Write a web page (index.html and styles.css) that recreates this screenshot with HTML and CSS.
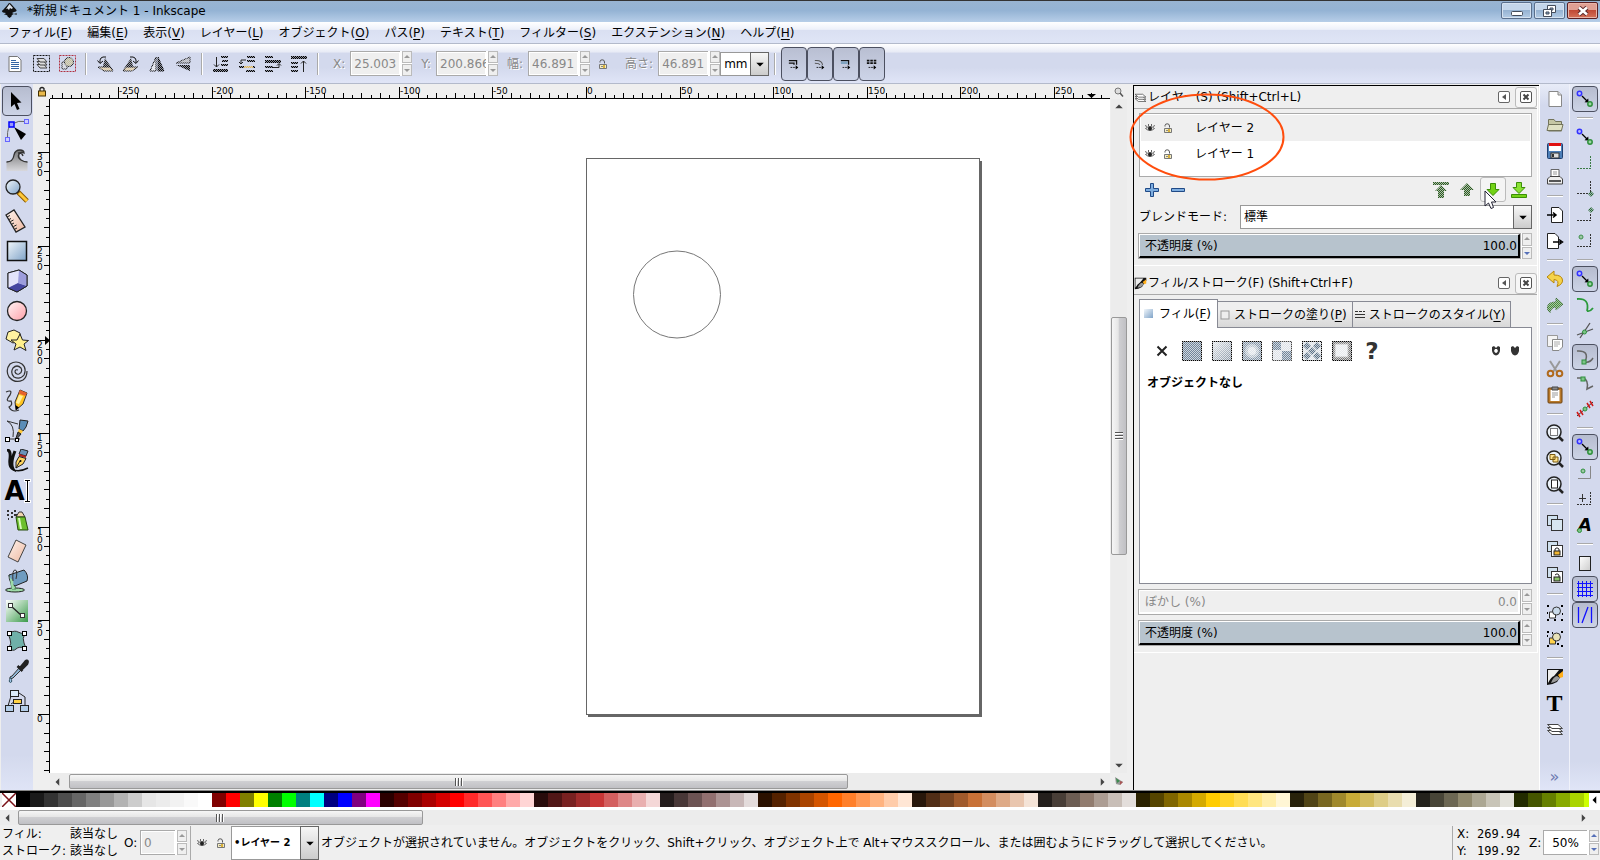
FILE: index.html
```html
<!DOCTYPE html>
<html lang="ja">
<head>
<meta charset="utf-8">
<title>*新規ドキュメント 1 - Inkscape</title>
<link rel="stylesheet" href="styles.css">
</head>
<body>
<svg class="defs" width="0" height="0" aria-hidden="true">
  <defs>
    <pattern id="checker" width="2" height="2" patternUnits="userSpaceOnUse"><rect width="2" height="2" fill="#555"/><rect width="1" height="1" fill="#fff"/><rect x="1" y="1" width="1" height="1" fill="#fff"/></pattern>
    <mask id="dither" maskUnits="userSpaceOnUse" x="0" y="0" width="30" height="30"><rect width="30" height="30" fill="url(#checker)"/></mask>
    <linearGradient id="blue" x1="0" y1="0" x2="1" y2="1"><stop offset="0" stop-color="#f2f7fb"/><stop offset="1" stop-color="#7fa3c8"/></linearGradient>
    <linearGradient id="steel" x1="0" y1="0" x2="1" y2="1"><stop offset="0" stop-color="#e4e8ec"/><stop offset="1" stop-color="#8795a5"/></linearGradient>
    <linearGradient id="pink" x1="0" y1="0" x2="1" y2="1"><stop offset="0" stop-color="#fff6f6"/><stop offset="1" stop-color="#ff9fa8"/></linearGradient>
    <linearGradient id="peach" x1="0" y1="0" x2="1" y2="1"><stop offset="0" stop-color="#fff4ee"/><stop offset="1" stop-color="#eeb8a0"/></linearGradient>
    <linearGradient id="gray" x1="0" y1="0" x2="0" y2="1"><stop offset="0" stop-color="#777"/><stop offset="1" stop-color="#d8d8dc"/></linearGradient>
    <linearGradient id="paper" x1="0" y1="0" x2="1" y2="1"><stop offset="0" stop-color="#fff"/><stop offset="1" stop-color="#ccc"/></linearGradient>
    <linearGradient id="greenfill" x1="0" y1="0" x2="1" y2="1"><stop offset="0" stop-color="#fff"/><stop offset="1" stop-color="#3a9a4a"/></linearGradient>
    <symbol id="eye" viewBox="0 0 10 10"><path d="M.500 5.500Q5 1.500 9.500 5.500Q5 9.500 .500 5.500Z" fill="#ddd" stroke="#666"/><circle cx="5" cy="5.500" r="2" fill="#222"/><path d="M1.500 4L.500 2M3.500 3V1M6.500 3V1M8.500 4L9.500 2" stroke="#666" fill="none"/></symbol>
    <symbol id="unlock" viewBox="0 0 10 10"><path d="M2 3.500V2.500Q2.200 .8 4.200 .8Q6.500 .8 6.500 3V4.500" fill="none" stroke="#555"/><path d="M1.500 5.500H8.500V9.500H1.500Z" fill="#f4ecc0" stroke="#777"/><path d="M6 6V9" stroke="#d9b13a" stroke-width="2"/><path d="M3 7.500H5" stroke="#888"/></symbol>
    <symbol id="snap" viewBox="0 0 18 18"><path d="M6 6L11 11" stroke="#000" stroke-width="1.200"/><path d="M8.500 12.200L12.600 12.600L12.200 8.500Z"/><circle cx="3.500" cy="3.500" r="2.200" fill="#b8b8ff" stroke="#33f" stroke-width="1.500"/><circle cx="14" cy="14" r="2.200" fill="#9cd8a4" stroke="#2f8f3c" stroke-width="1.500"/></symbol>
    <symbol id="down" viewBox="0 0 8 8"><path d="M1 3H7L4 6Z"/></symbol>
    <symbol id="closebox" viewBox="0 0 12 12"><rect x=".500" y=".500" width="11" height="11" rx="1.500" fill="#fff" stroke="#555"/><path d="M3.500 3.500L8.500 8.500M8.500 3.500L3.500 8.500" stroke="#444" stroke-width="2"/></symbol>
    <symbol id="leftbox" viewBox="0 0 12 12"><rect x=".500" y=".500" width="11" height="11" rx="1.500" fill="#fff" stroke="#666"/><path d="M8 3V9L4 6Z" fill="#555"/></symbol>
    <symbol id="fillstroke" viewBox="0 0 18 18"><path d="M1 1H17V5L11 14Q6 17 1 17Z" fill="#111"/><path d="M2 2H13L8 8Q5 9 2 15Z" fill="#eee"/><path d="M5 15Q7 9 11 8L14 10Q11 14 5 15Z" fill="#999"/><path d="M12 7L17 3V9L14 10Z" fill="#ffae1a"/></symbol>
    <symbol id="layers" viewBox="0 0 18 18"><g fill="#fff" stroke="#444"><path d="M1.500 10.500H12L16.500 14.500H6Z"/><path d="M1.500 7.500H12L16.500 11.500H6Z"/><path d="M1.500 4.500H12L16.500 8.500H6Z"/></g></symbol>
  </defs>
</svg>

<div class="app">
<header class="titlebar">
  <svg class="logo" width="17" height="17" viewBox="0 0 17 17"><path d="M8.500 1Q9.500 1 11 3L15.500 8Q16 9.500 13 10L11 11L13 12Q10 13 10.500 14.500L8.500 16L6.500 14.500Q7 13 3 12.500L5 11L2 10.500Q0 9 2 8L6.500 3Q7.500 1 8.500 1Z" fill="#111"/><path d="M8.500 2L12 6L10.500 7L9 6L8 8L6.500 6.500L5 7Z" fill="#d9e2ec"/><path d="M13.500 12H16" stroke="#111"/></svg>
  <h1 class="title">*新規ドキュメント 1 - Inkscape</h1>
  <div class="winbtns">
    <button class="winbtn" aria-label="最小化"><svg width="12" height="12" viewBox="0 0 12 12"><rect x=".5" y="6.500" width="11" height="4" rx="1" fill="#fff" stroke="#444c5a"/></svg></button>
    <button class="winbtn" aria-label="元に戻す"><svg width="13" height="12" viewBox="0 0 13 12"><path d="M4.500 .500H12.500V7.500H4.500Z" fill="#fff" stroke="#444c5a"/><path d="M7 3H10V5H7Z" fill="#86a5c4" stroke="#444c5a"/><path d="M.500 4.500H8.500V11.500H.500Z" fill="#fff" stroke="#444c5a"/><path d="M3 7H6V9H3Z" fill="#86a5c4" stroke="#444c5a"/></svg></button>
    <button class="winbtn close" aria-label="閉じる"><svg width="12" height="10" viewBox="0 0 12 10"><path d="M2 1.500L10 8.500M10 1.500L2 8.500" stroke="#5c2a2a" stroke-width="4.500"/><path d="M2 1.500L10 8.500M10 1.500L2 8.500" stroke="#fff" stroke-width="2.500"/></svg></button>
  </div>
</header>

<nav class="menubar">
  <button>ファイル(<u>F</u>)</button><button>編集(<u>E</u>)</button><button>表示(<u>V</u>)</button><button>レイヤー(<u>L</u>)</button><button>オブジェクト(<u>O</u>)</button><button>パス(<u>P</u>)</button><button>テキスト(<u>T</u>)</button><button>フィルター(<u>S</u>)</button><button>エクステンション(<u>N</u>)</button><button>ヘルプ(<u>H</u>)</button>
</nav>

<div class="toolbar">
  <button class="tb" aria-label="すべて選択"><svg width="16" height="16" viewBox="0 0 16 16"><path d="M2 .500H10.500L14 4V15.500H2Z" fill="#fff" stroke="#777"/><path d="M4 4.500H9M4 6.500H12M4 8.500H12M4 10.500H12M4 12.500H12" stroke="#3465a4"/></svg></button>
  <button class="tb" aria-label="全レイヤー選択"><svg width="17" height="17" viewBox="0 0 17 17"><rect x=".500" y=".500" width="16" height="16" fill="none" stroke="#111" stroke-dasharray="2 1"/><g fill="#ddd" stroke="#444"><path d="M4 9.500H11L14 13H7Z"/><path d="M4 6.500H11L14 10H7Z"/><path d="M4 3.500H11L14 7H7Z"/></g></svg></button>
  <button class="tb" aria-label="選択解除"><svg width="17" height="17" viewBox="0 0 17 17"><rect x=".500" y=".500" width="16" height="16" fill="none" stroke="#b03040" stroke-dasharray="2 1"/><g mask="url(#dither)"><path d="M3 7H8V14H3Z" fill="#ddd" stroke="#222"/><circle cx="10" cy="7" r="4.500" fill="#c9c298" stroke="#222"/></g></svg></button>
  <i class="vsep"></i>
  <button class="tb" aria-label="左回転"><svg width="18" height="18" viewBox="0 0 18 18"><g mask="url(#dither)"><path d="M9 3L17 15H6Z" fill="#222"/><path d="M2 12H14L17 16H8Z" fill="#e8cf9c" stroke="#111"/></g><path d="M10 2Q3 1 4 8M1.500 5.500L4 8.500L7 6" fill="none" stroke="#111"/></svg></button>
  <button class="tb" aria-label="右回転"><svg width="18" height="18" viewBox="0 0 18 18"><g mask="url(#dither)"><path d="M9 3L1 15H12Z" fill="#222"/><path d="M16 12H4L1 16H10Z" fill="#e8cf9c" stroke="#111"/></g><path d="M8 2Q15 1 14 8M16.500 5.500L14 8.500L11 6" fill="none" stroke="#111"/></svg></button>
  <button class="tb" aria-label="水平反転"><svg width="18" height="18" viewBox="0 0 18 18"><g mask="url(#dither)"><path d="M8 2V16H2Z" fill="#eee" stroke="#000"/><path d="M10 2V16H16Z" fill="#111" stroke="#000"/></g></svg></button>
  <button class="tb" aria-label="垂直反転"><svg width="18" height="18" viewBox="0 0 18 18"><g mask="url(#dither)"><path d="M16 8H2L16 2Z" fill="#bbb" stroke="#222"/><path d="M16 10H2L16 16Z" fill="#111"/></g></svg></button>
  <i class="vsep"></i>
  <button class="tb" aria-label="最背面へ"><svg width="18" height="18" viewBox="0 0 18 18"><g mask="url(#dither)"><path d="M9 1H16V3H9ZM10 5H16V7H10ZM9 9H16V11H9Z" fill="#000"/><path d="M1 14H16V17H1Z" fill="#000"/></g><path d="M4.500 2V12M2 9.500L4.500 12L7 9.500" fill="none" stroke="#222"/></svg></button>
  <button class="tb" aria-label="背面へ"><svg width="18" height="18" viewBox="0 0 18 18"><g mask="url(#dither)"><path d="M9 1H17V3H9ZM9 5H17V7H9ZM1 11H17V13H1ZM8 15H17V17H8Z" fill="#000"/><path d="M6 11H15V13H6Z" fill="#e7bb55"/></g><path d="M8 5H3V9M1 7L3 9L5 7" fill="none" stroke="#222"/></svg></button>
  <button class="tb" aria-label="前面へ"><svg width="18" height="18" viewBox="0 0 18 18"><g mask="url(#dither)"><path d="M1 1H9V3H1ZM1 5H17V8H1ZM1 11H9V13H1ZM1 15H9V17H1Z" fill="#000"/></g><path d="M9 12.500H15V9M13 10.500L15 8.500L17 10.500" fill="none" stroke="#222"/></svg></button>
  <button class="tb" aria-label="最前面へ"><svg width="18" height="18" viewBox="0 0 18 18"><g mask="url(#dither)"><path d="M1 1H17V4H1ZM1 7H8V9H1ZM1 11H8V13H1ZM1 15H8V17H1Z" fill="#000"/></g><path d="M13.500 17V6M11 8.500L13.500 6L16 8.500" fill="none" stroke="#222"/></svg></button>
  <i class="vsep"></i>
  <label class="fieldlabel" for="fx">X:</label>
  <span class="spin off"><input id="fx" value="25.003" disabled><span class="steps"><button disabled aria-label="増やす"><svg class="up"><use href="#down"/></svg></button><button disabled aria-label="減らす"><svg><use href="#down"/></svg></button></span></span>
  <label class="fieldlabel" for="fy">Y:</label>
  <span class="spin off"><input id="fy" value="200.866" disabled><span class="steps"><button disabled aria-label="増やす"><svg class="up"><use href="#down"/></svg></button><button disabled aria-label="減らす"><svg><use href="#down"/></svg></button></span></span>
  <label class="fieldlabel" for="fw">幅:</label>
  <span class="spin off"><input id="fw" value="46.891" disabled><span class="steps"><button disabled aria-label="増やす"><svg class="up"><use href="#down"/></svg></button><button disabled aria-label="減らす"><svg><use href="#down"/></svg></button></span></span>
  <button class="tb" aria-label="縦横比を固定"><svg width="10" height="10"><use href="#unlock"/></svg></button>
  <label class="fieldlabel" for="fh">高さ:</label>
  <span class="spin off"><input id="fh" value="46.891" disabled><span class="steps"><button disabled aria-label="増やす"><svg class="up"><use href="#down"/></svg></button><button disabled aria-label="減らす"><svg><use href="#down"/></svg></button></span></span>
  <span class="combo unit"><select aria-label="単位"><option>mm</option></select><span class="arrow"><svg><use href="#down"/></svg></span></span>
  <i class="vsep"></i>
  <div class="toggles">
    <button class="toggle" aria-label="ストローク幅を拡大"><svg width="12" height="12" viewBox="0 0 14 14"><path d="M1 3H10V8M1 6H7V8" fill="none" stroke="#111" stroke-width="1.500"/><path d="M3 11H11" stroke="#111" stroke-dasharray="2 1"/><path d="M9 8.500L12 11L9 13.500Z"/></svg></button>
    <button class="toggle" aria-label="角の半径を拡大"><svg width="12" height="12" viewBox="0 0 14 14"><path d="M1 3Q9 2 10 8M1 6Q6 6 7 8" fill="none" stroke="#555" stroke-width="1.200"/><path d="M3 11H11" stroke="#111" stroke-dasharray="2 1"/><path d="M9 8.500L12 11L9 13.500Z"/></svg></button>
    <button class="toggle" aria-label="グラデーションを移動"><svg width="12" height="12" viewBox="0 0 14 14"><path d="M1 3H10V8" fill="none" stroke="#111" stroke-width="1.500"/><path d="M1 4H9V7H1Z" fill="#7fa3c0"/><path d="M3 11H11" stroke="#111" stroke-dasharray="2 1"/><path d="M9 8.500L12 11L9 13.500Z"/></svg></button>
    <button class="toggle" aria-label="パターンを移動"><svg width="12" height="12" viewBox="0 0 14 14"><path d="M1 3H12M1 6H12" stroke="#111" stroke-width="2" stroke-dasharray="3 1"/><path d="M3 11H11" stroke="#111" stroke-dasharray="2 1"/><path d="M9 8.500L12 11L9 13.500Z"/></svg></button>
  </div>
</div>

<main class="main">
  <aside class="toolbox">
    <button class="tool on" aria-label="選択"><svg viewBox="0 0 24 24"><path d="M6 3V18L9.500 15L12 21L14.500 20L12 14L16.500 13.500Z"/></svg></button>
    <button class="tool" aria-label="ノード"><svg viewBox="0 0 24 24"><path d="M2.500 18Q2 8 7 5Q14 1 20 2.500" fill="none" stroke="#666"/><path d="M9 8L21 15L16 21Z"/><rect x="4" y="3" width="5" height="5" fill="#99f" stroke="#00f" stroke-width="1.500"/><rect x=".500" y="18.500" width="4" height="4" fill="#ccf" stroke="#66f"/><rect x="19.500" y=".500" width="4" height="4" fill="#ccf" stroke="#66f"/></svg></button>
    <button class="tool" aria-label="微調整"><svg viewBox="0 0 24 24"><path d="M1.500 22V13Q8 13 9 6Q10 1 15 1Q19 1 19 4Q16 2 15 5Q14 8 17 11Q19 13 22.500 13V22Z" fill="url(#gray)"/><path d="M1.500 13Q8 13 9 6Q10 1 15 1Q19 1 19 4Q16 2 14 5Q12 8 16 11Q19 13 22.500 13M13 4Q17 3 18 7" fill="none" stroke="#333" stroke-width="1.300"/></svg></button>
    <button class="tool" aria-label="ズーム"><svg viewBox="0 0 24 24"><path d="M13 13L22 22" stroke="#8a5a00" stroke-width="5"/><path d="M14 14L22 22" stroke="#ffc838" stroke-width="3"/><circle cx="8" cy="8" r="7" fill="url(#blue)" stroke="#222" stroke-width="1.300"/></svg></button>
    <button class="tool" aria-label="計測"><svg viewBox="0 0 24 24"><path d="M1 6L9 1L20 18L11 23Z" fill="url(#peach)" stroke="#222" stroke-width="1.300"/><path d="M2 8L5 6.500M4 10.500L6 9.500M5.500 12.500L8.500 11M7 15L9 14M8.500 17.500L11.500 16M10 20L12 19" stroke="#222"/></svg></button>
    <button class="tool" aria-label="矩形"><svg viewBox="0 0 24 24"><rect x="2.500" y="2.500" width="19" height="19" fill="url(#blue)" stroke="#111" stroke-width="1.500"/></svg></button>
    <button class="tool" aria-label="3Dボックス"><svg viewBox="0 0 24 24"><path d="M3 4L14 1L22 6V17L12 23L3 19Z" fill="#b9b9ea" stroke="#222"/><path d="M3 4L14 1V14L3 19Z" fill="#e4e4fa"/><path d="M3 19L13 14L22 17L12 23Z" fill="#4646a0"/><path d="M14 1L22 6V17L13 14Z" fill="#9d9ddc"/><path d="M3 4L14 1L22 6V17L12 23L3 19Z" fill="none" stroke="#222"/></svg></button>
    <button class="tool" aria-label="円"><svg viewBox="0 0 24 24"><circle cx="12" cy="12" r="9.500" fill="url(#pink)" stroke="#222" stroke-width="1.300"/></svg></button>
    <button class="tool" aria-label="星形"><svg viewBox="0 0 24 24"><path d="M3 3L9 1L15 4V11L8 14L1 10Z" fill="#fff2a0" stroke="#222"/><path d="M15 5L17.500 11L23.500 11.500L19 15L21 21.500L15 18L9 21L11 15L6 11L12 11Z" fill="#fff08c" stroke="#222"/></svg></button>
    <button class="tool" aria-label="らせん"><svg viewBox="0 0 24 24"><path d="M13 11Q10 10 10 13Q11 16 14 15Q18 13 16 9Q12 5 8 9Q5 14 9 18Q15 21 19 16Q22 9 17 5Q11 1 5 5Q0 11 4 18Q10 25 18 21Q22 18 22 12" fill="none" stroke="#333" stroke-width="1.200"/></svg></button>
    <button class="tool" aria-label="鉛筆"><svg viewBox="0 0 24 24"><path d="M1 3Q8 0 5 6Q-1 13 6 12Q8 16 4 18Q7 24 14 21" fill="none" stroke="#333" stroke-width="1.200"/><path d="M15 1L22 4L18 15L11 21L10 13Z" fill="#ffc422" stroke="#333"/><path d="M15 1L22 4L20.500 7L13.500 4.500Z" fill="#e5632d"/><path d="M14 6L11 14L14 15L18 7Z" fill="#fff0a0"/><path d="M10.500 16L14 18.500L11 21Z"/></svg></button>
    <button class="tool" aria-label="ペン"><svg viewBox="0 0 24 24"><path d="M2 2L13 5M2 2Q10 6 8 18M3 20H15" fill="none" stroke="#333"/><path d="M15 1L23 2L21 8L18 12L14 10Z" fill="#5b8db8" stroke="#222"/><path d="M14 10L18 12L16 15L13 13Z" fill="#ffc838"/><path d="M13 13L16 15L10 22Z" fill="#555" stroke="#222"/><rect x=".500" y="18.500" width="4" height="4" fill="#fff" stroke="#000"/><rect x="10.500" y="19.500" width="3" height="3" fill="#fff" stroke="#000"/></svg></button>
    <button class="tool" aria-label="カリグラフィ"><svg viewBox="0 0 24 24"><path d="M2 1Q6 1 5 10Q4 18 8 20Q5 14 10 2" fill="none" stroke="#111" stroke-width="3"/><path d="M7 20Q13 24 23 19" fill="none" stroke="#111" stroke-width="1.500"/><path d="M16 0L23 2L21 7L14 5Z" fill="#6a93ba" stroke="#222"/><path d="M14 6L21 8" stroke="#b02020" stroke-width="2"/><path d="M14 7.500L21 9.500L18 15L11 19L11 13Z" fill="#ffd560" stroke="#222"/><path d="M11 19L15 12" stroke="#222"/><circle cx="15.500" cy="12" r="1"/></svg></button>
    <button class="tool text" aria-label="テキスト"><span class="glyph">A</span><svg class="caret" viewBox="0 0 7 24"><path d="M0 1.500H7M0 22.500H7M3.500 2V22" stroke="#fff" stroke-width="3"/><path d="M1 1.500H6M1 22.500H6M3.500 2V22" stroke="#000"/></svg></button>
    <button class="tool" aria-label="スプレー"><svg viewBox="0 0 24 24"><path d="M2 2H4M6 4H8M2 6H4M9 2H11M6 8H8M3 10H4M9 6H12" stroke="#333" stroke-width="2"/><path d="M11 8L14 3H17L20 8Z" fill="#f1d6b0" stroke="#333"/><path d="M11 8H20L23 21H13Z" fill="#6cc02e" stroke="#264d0c"/><path d="M13 9H15L17 20H15Z" fill="#d8f7bd"/></svg></button>
    <button class="tool" aria-label="消しゴム"><svg viewBox="0 0 24 24"><path d="M11 1L21 6L13 23L3 18Z" fill="url(#peach)" stroke="#444"/></svg></button>
    <button class="tool" aria-label="バケツ"><svg viewBox="0 0 24 24"><ellipse cx="10" cy="21" rx="9.500" ry="2" fill="#9edba8" stroke="#222"/><path d="M4 6L7 20H11Q8 14 8 8Z" fill="#9edba8" stroke="#4b7d55"/><path d="M4 6L19 1Q24 6 22 12L10 17Q4 14 4 6Z" fill="#6f9cc0" stroke="#222"/><path d="M4 6Q5 10 8 11L9 20H7Z" fill="#9edba8"/><path d="M8 12Q7 1 10 1T11 10" fill="none" stroke="#333"/></svg></button>
    <button class="tool" aria-label="グラデーション"><svg viewBox="0 0 24 24"><rect x="1" y="1" width="22" height="22" fill="url(#greenfill)"/><path d="M6 7L17 17" stroke="#222" stroke-width="1.300"/><rect x="3.500" y="4.500" width="4" height="4" fill="#fff" stroke="#333"/><rect x="15.500" y="14.500" width="4" height="4" fill="#fff" stroke="#333"/></svg></button>
    <button class="tool" aria-label="メッシュ"><svg viewBox="0 0 24 24"><path d="M4 4Q10 1 13 3T20 4Q17 10 19 14T20 19Q14 17 11 20T4 19Q7 14 5 10T4 4" fill="#6fb0a8" stroke="#333"/><g fill="#fff" stroke="#000"><rect x="2.500" y="2.500" width="4" height="4"/><rect x="17.500" y="2.500" width="4" height="4"/><rect x="2.500" y="17.500" width="4" height="4"/><rect x="17.500" y="17.500" width="4" height="4"/></g></svg></button>
    <button class="tool" aria-label="スポイト"><svg viewBox="0 0 24 24"><path d="M14 9L7 17L5 18V20L8 19L16 11Z" fill="#8fb4d4" stroke="#333"/><path d="M12.500 7L17.500 12M15 9L20 3Q22 1 22.500 2T22 5L17 10Z" fill="#222" stroke="#222" stroke-width="2.500"/><path d="M5.500 18.500Q3 23 5.500 23.500Q8 23 5.500 18.500" fill="#9fc4e4" stroke="#356"/></svg></button>
    <button class="tool" aria-label="コネクタ"><svg viewBox="0 0 24 24"><path d="M6 7L3 17M14 4L20 8V17M9 13L6 15" stroke="#222" fill="none"/><rect x="5.500" y="1.500" width="8" height="6" fill="#dcebfa" stroke="#222"/><rect x="8.500" y="10.500" width="8" height="4" fill="#ffd246" stroke="#222"/><rect x=".500" y="16.500" width="8" height="6" fill="#b3cde8" stroke="#222"/><rect x="15.500" y="16.500" width="8" height="6" fill="#b3cde8" stroke="#222"/></svg></button>
  </aside>

  <section class="editor">
    <button class="corner" aria-label="ガイドを固定"><svg width="10" height="12" viewBox="0 0 10 12"><path d="M3 5V2.500Q5 .500 7 2.500V5" fill="none" stroke="#222" stroke-width="1.300"/><rect x="1.500" y="5" width="7" height="5" fill="#e9b94a" stroke="#443000"/></svg></button>
    <svg class="hruler" id="hruler"></svg>
    <button class="corner" aria-label="ズーム"><svg width="10" height="10" viewBox="0 0 10 10"><circle cx="4" cy="4" r="3" fill="#ddd" stroke="#777"/><path d="M6 6L9 9.500" stroke="#555" stroke-width="1.500"/></svg></button>
    <svg class="vruler" id="vruler"></svg>
    <svg class="canvas"><path d="M931 62V617H538" fill="none" stroke="#666" stroke-width="2"/><rect x="536.500" y="59.500" width="393" height="556" fill="#fff" stroke="#666"/><circle cx="627" cy="195.500" r="43.500" fill="none" stroke="#777"/></svg>
    <div class="vscroll"><button aria-label="上へ"><svg class="up"><use href="#down"/></svg></button><div class="track"><div class="thumb"><i></i><i></i><i></i></div></div><button aria-label="下へ"><svg><use href="#down"/></svg></button></div>
    <div></div>
    <div class="hscroll"><button aria-label="左へ"><svg class="lt"><use href="#down"/></svg></button><div class="track"><div class="thumb"><i></i><i></i><i></i></div></div><button aria-label="右へ"><svg class="rt"><use href="#down"/></svg></button></div>
    <button class="corner" aria-label="カラーマネジメント"><svg width="10" height="10" viewBox="0 0 10 10"><path d="M1 1L9 6L6 9L2 8Z" fill="#999"/><path d="M2 2L6 5L3 7Z" fill="#3d8b50"/><path d="M6 5L9 6L6 9Z" fill="#a55"/></svg></button>
  </section>

  <aside class="docks">
    <section class="dialog">
      <div class="dtitle"><svg width="13" height="13"><use href="#layers"/></svg><h2>レイヤー(S) (Shift+Ctrl+L)</h2><button class="mini" aria-label="アイコン化"><svg width="12" height="12"><use href="#leftbox"/></svg></button><button class="mini framed" aria-label="閉じる"><svg width="12" height="12"><use href="#closebox"/></svg></button></div>
      <div class="dbody">
        <ul class="layerlist">
          <li class="sel"><button aria-label="表示"><svg width="10" height="10"><use href="#eye"/></svg></button><button aria-label="ロック"><svg width="10" height="10"><use href="#unlock"/></svg></button><span>レイヤー 2</span></li>
          <li><button aria-label="表示"><svg width="10" height="10"><use href="#eye"/></svg></button><button aria-label="ロック"><svg width="10" height="10"><use href="#unlock"/></svg></button><span>レイヤー 1</span></li>
        </ul>
        <div class="layerbtns">
          <button aria-label="追加"><svg width="16" height="16" viewBox="0 0 16 16"><path d="M6.500 1.500H9.500V6.500H14.500V9.500H9.500V14.500H6.500V9.500H1.500V6.500H6.500Z" fill="#7eaee0" stroke="#204a87"/></svg></button>
          <button aria-label="削除"><svg width="16" height="16" viewBox="0 0 16 16"><path d="M1.500 6.500H14.500V9.500H1.500Z" fill="#7eaee0" stroke="#204a87"/></svg></button>
          <span class="grow"></span>
          <button aria-label="最上位へ"><svg width="16" height="16" viewBox="0 0 16 16"><g mask="url(#dither)" fill="#2c5c22"><path d="M0 0H16V3H0Z"/><path d="M8 3L14 9H11V16H5V9H2Z"/></g></svg></button>
          <button aria-label="上へ"><svg width="16" height="16" viewBox="0 0 16 16"><path d="M8 1L15 8H11V14H5V8H1Z" fill="#2c5c22" mask="url(#dither)"/></svg></button>
          <button class="hover" aria-label="下へ"><svg width="16" height="16" viewBox="0 0 16 16"><path d="M5.500 1.500H10.500V7.500H14L8 13.500L2 7.500H5.500Z" fill="#73d216" stroke="#3b8f06"/></svg></button>
          <button aria-label="最下位へ"><svg width="16" height="16" viewBox="0 0 16 16"><path d="M5.500 .500H10.500V5.500H14L8 11.500L2 5.500H5.500Z" fill="#8ae234" stroke="#3b8f06"/><path d="M.500 12.500H15.500V15.500H.500Z" fill="#73d216" stroke="#3b8f06"/></svg></button>
        </div>
        <div class="blend"><label for="blend">ブレンドモード:</label><span class="combo"><select id="blend"><option>標準</option></select><span class="arrow"><svg><use href="#down"/></svg></span></span></div>
        <div class="slider"><span class="bar"><label for="lop">不透明度 (%)</label><input id="lop" value="100.0"></span><span class="steps"><button disabled aria-label="増やす"><svg class="up"><use href="#down"/></svg></button><button class="live" aria-label="減らす"><svg><use href="#down"/></svg></button></span></div>
      </div>
    </section>
    <section class="dialog">
      <div class="dtitle"><svg width="13" height="13"><use href="#fillstroke"/></svg><h2>フィル/ストローク(F) (Shift+Ctrl+F)</h2><button class="mini" aria-label="アイコン化"><svg width="12" height="12"><use href="#leftbox"/></svg></button><button class="mini framed" aria-label="閉じる"><svg width="12" height="12"><use href="#closebox"/></svg></button></div>
      <div class="dbody">
        <div class="tabs">
          <button class="tab active"><svg width="10" height="10" viewBox="0 0 10 10"><rect width="9" height="9" fill="url(#blue)"/></svg><span>フィル(<u>F</u>)</span></button><button class="tab"><svg width="10" height="10" viewBox="0 0 10 10"><rect x="1" y="1" width="8" height="8" fill="#eee" stroke="#999"/></svg><span>ストロークの塗り(<u>P</u>)</span></button><button class="tab"><svg width="10" height="10" viewBox="0 0 10 10"><path d="M0 1.500H10" stroke="#333" stroke-dasharray="3 1"/><path d="M0 4.500H10M0 7.500H10" stroke="#333"/></svg><span>ストロークのスタイル(<u>Y</u>)</span></button>
        </div>
        <div class="page">
          <div class="paints">
            <button aria-label="なし"><svg width="20" height="20" viewBox="0 0 20 20"><path d="M5.500 5.500L14.500 14.500M14.500 5.500L5.500 14.500" stroke="#222" stroke-width="2"/></svg></button>
            <button aria-label="単一色"><svg width="20" height="20" viewBox="0 0 20 20"><rect x=".500" y=".500" width="19" height="19" fill="#71869c" stroke="#000" mask="url(#dither)"/></svg></button>
            <button aria-label="線形"><svg width="20" height="20" viewBox="0 0 20 20"><rect x=".500" y=".500" width="19" height="19" fill="url(#steel)" stroke="#000" mask="url(#dither)"/></svg></button>
            <button aria-label="放射"><svg width="20" height="20" viewBox="0 0 20 20"><g mask="url(#dither)"><rect x=".500" y=".500" width="19" height="19" fill="#8798aa" stroke="#000"/><circle cx="10" cy="10" r="7" fill="#b7c2cd"/><circle cx="10" cy="10" r="4" fill="#e0e5ea"/></g></svg></button>
            <button aria-label="メッシュ"><svg width="20" height="20" viewBox="0 0 20 20"><g mask="url(#dither)"><rect x=".500" y=".500" width="19" height="19" fill="#dde2e8" stroke="#444"/><path d="M1 1H9V9H1ZM10 10H19V19H10Z" fill="#71869c"/></g></svg></button>
            <button aria-label="パターン"><svg width="20" height="20" viewBox="0 0 20 20"><g mask="url(#dither)"><rect x=".500" y=".500" width="19" height="19" fill="#dde2e8" stroke="#000"/><path d="M5 1L9 5L5 9L1 5ZM15 1L19 5L15 9L11 5ZM5 11L9 15L5 19L1 15ZM15 11L19 15L15 19L11 15ZM10 6L14 10L10 14L6 10Z" fill="#5c7288"/></g></svg></button>
            <button aria-label="スウォッチ"><svg width="20" height="20" viewBox="0 0 20 20"><g mask="url(#dither)"><rect x=".500" y=".500" width="19" height="19" fill="#777" stroke="#000"/><rect x="3" y="3" width="13" height="13" fill="#e8ebee" stroke="#aaa"/></g></svg></button>
            <button class="q" aria-label="未設定">?</button>
            <span class="grow"></span>
            <button class="rule" aria-label="偶奇"><svg width="10" height="10" viewBox="0 0 10 10"><path d="M1 1L3 0L5 2L7 0L9 1V5Q8 9 5 9.500Q2 9 1 5Z" fill="#333"/><path d="M4 3H6L7 5Q6 7 5 7T3 5Z" fill="#fff"/></svg></button>
            <button class="rule" aria-label="非ゼロ"><svg width="10" height="10" viewBox="0 0 10 10"><path d="M1 1L3 0L5 2L7 0L9 1V5Q8 9 5 9.500Q2 9 1 5Z" fill="#333"/></svg></button>
          </div>
          <p class="none">オブジェクトなし</p>
        </div>
        <div class="slider off"><span class="bar"><label for="blur">ぼかし (%)</label><input id="blur" value="0.0" disabled></span><span class="steps"><button disabled aria-label="増やす"><svg class="up"><use href="#down"/></svg></button><button disabled aria-label="減らす"><svg><use href="#down"/></svg></button></span></div>
        <div class="slider"><span class="bar"><label for="fop">不透明度 (%)</label><input id="fop" value="100.0"></span><span class="steps"><button disabled aria-label="増やす"><svg class="up"><use href="#down"/></svg></button><button disabled aria-label="減らす"><svg><use href="#down"/></svg></button></span></div>
      </div>
    </section>
    <svg class="mark" width="158" height="90" viewBox="0 0 158 90"><ellipse cx="79" cy="45" rx="76.500" ry="42.500" fill="none" stroke="#ff4d0d" stroke-width="2"/></svg>
    <svg class="pointer" width="14" height="20" viewBox="0 0 14 20"><path d="M1 1V16L4.500 13L7 18.500L9.500 17.500L7.500 12H12Z" fill="#fff" stroke="#223"/></svg>
  </aside>

  <aside class="side commands">
    <button aria-label="新規"><svg viewBox="0 0 18 18"><path d="M3 1.500H12L15.500 5V16.500H3Z" fill="#fff" stroke="#888"/><path d="M12 1.500V5H15.500" fill="#ddd" stroke="#888"/></svg></button>
    <button aria-label="開く"><svg viewBox="0 0 18 18"><path d="M2.500 15V3.500H8L9.500 5.500H15.500V15Z" fill="#c5c6a4" stroke="#73745a"/><path d="M1 14.500L2.500 8.500H17L15.500 14.500Z" fill="#e0e1c4" stroke="#73745a"/></svg></button>
    <button aria-label="保存"><svg viewBox="0 0 18 18"><rect x="1.500" y="1.500" width="15" height="15" rx="1" fill="#4d7fb8" stroke="#1f3f6f"/><rect x="3" y="2" width="12" height="7" fill="#fff"/><path d="M3 2.500H15" stroke="#e01010" stroke-width="3"/><rect x="5" y="11" width="8" height="5" fill="#ddd" stroke="#333"/><path d="M7 12V15" stroke="#333" stroke-width="2"/></svg></button>
    <button aria-label="印刷"><svg viewBox="0 0 18 18"><path d="M5 9V1.500H13V9" fill="#fff" stroke="#666"/><path d="M7 4H11M7 6H11" stroke="#999"/><path d="M1.500 16V11L4 8.500H14L16.500 11V16Z" fill="#eee" stroke="#444"/><path d="M3 13H15" stroke="#555" stroke-width="2"/></svg></button>
    <hr>
    <button aria-label="インポート"><svg viewBox="0 0 18 18"><path d="M5.500 1.500H13L16.500 5V16.500H5.500Z" fill="#fff" stroke="#222"/><path d="M1 9H9M7 6.500L10 9L7 11.500" fill="none" stroke="#000" stroke-width="1.500"/></svg></button>
    <button aria-label="エクスポート"><svg viewBox="0 0 18 18"><path d="M1.500 1.500H9L12.500 5V16.500H1.500Z" fill="#fff" stroke="#222"/><path d="M7 10H15M13 7.500L16.500 10L13 12.500" fill="none" stroke="#000" stroke-width="1.500"/></svg></button>
    <hr>
    <button aria-label="元に戻す"><svg viewBox="0 0 18 18"><path d="M1 7L8 1V5Q16 5 16.500 10Q17 14 11 16.500Q14 10 8 9.500V13Z" fill="#f5d34a" stroke="#b8860b"/></svg></button>
    <button aria-label="やり直し"><svg viewBox="0 0 18 18"><path d="M17 8L10 2V6Q2 6 1.500 11Q1 14 4 16.500Q5 11 10 11V14Z" fill="#4c9232" stroke="#3d6e30" mask="url(#dither)"/></svg></button>
    <hr>
    <button aria-label="コピー"><svg viewBox="0 0 18 18"><path d="M1.500 1.500H11.500V12.500H1.500Z" fill="#f4f4f4" stroke="#999"/><path d="M6.500 5.500H16.500V13L13 16.500H6.500Z" fill="#fff" stroke="#888"/><path d="M8 8H14M8 10H14M8 12H12" stroke="#aaa"/></svg></button>
    <button aria-label="切り取り"><svg viewBox="0 0 18 18"><path d="M4 1L11 12M14 1L7 12" stroke="#999" stroke-width="2"/><circle cx="4.500" cy="13.500" r="2.800" fill="none" stroke="#b06a1e" stroke-width="2"/><circle cx="13.500" cy="13.500" r="2.800" fill="none" stroke="#b06a1e" stroke-width="2"/></svg></button>
    <button aria-label="貼り付け"><svg viewBox="0 0 18 18"><rect x="2" y="2" width="14" height="15" rx="1" fill="#b97a2a" stroke="#6e4310"/><rect x="4.500" y="4" width="9" height="11" fill="#fff"/><path d="M6 1H12V4H6Z" fill="#888" stroke="#444"/><path d="M6 7H12M6 9H12M6 11H9" stroke="#999"/></svg></button>
    <hr>
    <button aria-label="選択をズーム"><svg viewBox="0 0 18 18"><circle cx="8" cy="8" r="7" fill="#eaf1f8" stroke="#222" stroke-width="1.500"/><path d="M13 13L17 17" stroke="#222" stroke-width="2.500"/><rect x="4.500" y="4.500" width="7" height="7" fill="#fff" stroke="#000" stroke-dasharray="1 1"/></svg></button>
    <button aria-label="描画をズーム"><svg viewBox="0 0 18 18"><circle cx="8" cy="8" r="7" fill="#eaf1f8" stroke="#222" stroke-width="1.500"/><path d="M13 13L17 17" stroke="#222" stroke-width="2.500"/><path d="M4 4.500H9V9.500H4ZM7 7H12V12H7Z" fill="#ffe28a" stroke="#7a5a10"/></svg></button>
    <button aria-label="ページをズーム"><svg viewBox="0 0 18 18"><circle cx="8" cy="8" r="7" fill="#eaf1f8" stroke="#222" stroke-width="1.500"/><path d="M13 13L17 17" stroke="#222" stroke-width="2.500"/><rect x="5.500" y="4" width="6" height="8" fill="#fff" stroke="#222"/></svg></button>
    <hr>
    <button aria-label="複製"><svg viewBox="0 0 18 18"><rect x="1.500" y="1.500" width="10" height="10" fill="#cfe0ee" stroke="#333"/><rect x="5.500" y="5.500" width="11" height="11" fill="#d7e5f0" stroke="#333"/></svg></button>
    <button aria-label="クローン"><svg viewBox="0 0 18 18"><rect x="1.500" y="1.500" width="10" height="10" fill="#cfe0ee" stroke="#333"/><rect x="5.500" y="5.500" width="11" height="11" fill="#fff" stroke="#333"/><path d="M9 11V9Q11 6.500 13 9V11" fill="none" stroke="#222"/><rect x="8" y="11" width="6" height="4" fill="#f2b632" stroke="#222"/></svg></button>
    <button aria-label="クローン解除"><svg viewBox="0 0 18 18"><rect x="1.500" y="1.500" width="10" height="10" fill="#cfe0ee" stroke="#333"/><rect x="5.500" y="5.500" width="11" height="11" fill="#fff" stroke="#333"/><path d="M9 9Q11 6.500 13 9V11" fill="none" stroke="#222"/><rect x="8" y="11" width="6" height="4" fill="#8bc46a" stroke="#222"/></svg></button>
    <hr>
    <button aria-label="グループ化"><svg viewBox="0 0 18 18"><path d="M3.500 8H9.500V14H3.500Z" fill="#fff" stroke="#333"/><circle cx="10.500" cy="7" r="4" fill="#c9d9e9" stroke="#333"/><path d="M1 2H3M15 2H17M1 16H3M15 16H17M1 9H2M8 16H10M16 10H17" stroke="#000" stroke-width="2"/></svg></button>
    <button aria-label="グループ解除"><svg viewBox="0 0 18 18"><path d="M3.500 8H9.500V14H3.500Z" fill="#ffd24a" stroke="#333"/><circle cx="10.500" cy="7" r="4" fill="#e8e2b8" stroke="#333"/><path d="M1 2H3M15 2H17M1 16H3M15 16H17M1 6H2M11 14H13M6 3H7" stroke="#000" stroke-width="2"/></svg></button>
    <hr>
    <button aria-label="フィル/ストローク"><svg viewBox="0 0 18 18"><use href="#fillstroke"/></svg></button>
    <button class="serifT" aria-label="テキスト">T</button>
    <button aria-label="レイヤー"><svg viewBox="0 0 18 18"><use href="#layers"/></svg></button>
    <span class="grow"></span>
    <button class="more" aria-label="その他">»</button>
  </aside>

  <aside class="side snapbar">
    <button class="on" aria-label="スナップ"><svg><use href="#snap"/></svg></button>
    <hr>
    <button aria-label="境界枠"><svg><use href="#snap"/></svg></button>
    <button aria-label="境界枠エッジ"><svg viewBox="0 0 18 18"><path d="M14.500 2V14.500M1 14.500H15" stroke="#3b7b45" stroke-dasharray="2 1" fill="none"/></svg></button>
    <button aria-label="境界枠角"><svg viewBox="0 0 18 18"><path d="M14.500 1V12M1 13.500H12" stroke="#333" stroke-dasharray="2 1" fill="none"/><path d="M15 11L18 14L15 17L12 14Z" fill="#2b6b35" mask="url(#dither)"/></svg></button>
    <button aria-label="エッジ中点"><svg viewBox="0 0 18 18"><path d="M14.500 8V14M1 14.500H15" stroke="#333" stroke-dasharray="2 1" fill="none"/><path d="M15 1L18 4L15 7L12 4Z" fill="#2b6b35" mask="url(#dither)"/></svg></button>
    <button aria-label="枠中心"><svg viewBox="0 0 18 18"><path d="M14.500 2V14.500M1 14.500H15" stroke="#333" stroke-dasharray="2 1" fill="none"/><circle cx="5" cy="5" r="2" fill="#9cc8a4" stroke="#3f8f4c"/></svg></button>
    <hr>
    <button class="on" aria-label="ノード"><svg><use href="#snap"/></svg></button>
    <button aria-label="パス"><svg viewBox="0 0 18 18"><path d="M1 3Q14 2 11 15M11 15Q14 16 17 12" fill="none" stroke="#2a9a3a" stroke-width="1.800"/></svg></button>
    <button aria-label="交差"><svg viewBox="0 0 18 18"><path d="M1 13L17 7M4 16L14 1" stroke="#555" stroke-width="1.300"/><circle cx="8.500" cy="10" r="2" fill="#7cc488" stroke="#2f8f3c"/></svg></button>
    <button class="on" aria-label="シャープ"><svg viewBox="0 0 18 18"><path d="M1 3Q14 2 9 14M9 14Q14 15 17 10" fill="none" stroke="#666" stroke-width="1.500"/><rect x="6" y="12" width="4" height="4" fill="#7cc488" stroke="#2f8f3c"/></svg></button>
    <button aria-label="スムーズ"><svg viewBox="0 0 18 18"><path d="M1 4H7Q13 6 11 15L17 12" fill="none" stroke="#666" stroke-width="1.500"/><rect x="5" y="3" width="4" height="4" fill="#7cc488" stroke="#2f8f3c"/></svg></button>
    <button aria-label="線分中点"><svg viewBox="0 0 18 18"><path d="M1 16L17 2" stroke="#333"/><path d="M1 12L4 17M4 10L7 15M11 3L14 8M14 1L17 6" stroke="#d01818" stroke-width="1.500"/><circle cx="9" cy="9" r="2" fill="#7cc488" stroke="#2f8f3c"/></svg></button>
    <hr>
    <button class="on" aria-label="その他の点"><svg><use href="#snap"/></svg></button>
    <button aria-label="オブジェクト中心"><svg viewBox="0 0 18 18"><path d="M14.500 2V14.500H2" stroke="#888" fill="none"/><circle cx="7" cy="7" r="2" fill="#9cc8a4" stroke="#2f8f3c"/></svg></button>
    <button aria-label="回転中心"><svg viewBox="0 0 18 18"><path d="M14.500 2V14.500M1 14.500H15" stroke="#333" stroke-dasharray="2 1" fill="none"/><path d="M6.500 4V12M3 8.500H10" stroke="#333"/></svg></button>
    <button class="snapA" aria-label="テキストベースライン"><span>A</span><svg viewBox="0 0 18 18"><circle cx="3.500" cy="14.500" r="2" fill="#7cc488" stroke="#2f8f3c"/></svg></button>
    <hr>
    <button aria-label="ページ境界"><svg viewBox="0 0 18 18"><rect x="3.500" y="2.500" width="11" height="14" fill="url(#paper)" stroke="#222"/></svg></button>
    <button class="on" aria-label="グリッド"><svg viewBox="0 0 18 18"><path d="M2.500 1V17M6.500 1V17M10.500 1V17M14.500 1V17M1 3.500H17M1 7.500H17M1 11.500H17M1 15.500H17" stroke="#11f"/></svg></button>
    <button class="on" aria-label="ガイド"><svg viewBox="0 0 18 18"><path d="M2.500 1V17M15.500 1V17M6 17L12 1" stroke="#11f" stroke-width="1.300"/></svg></button>
  </aside>
</main>

<div class="palette">
  <div class="swatches" id="swatches"><button class="nofill" aria-label="なし"><svg width="14" height="14" viewBox="0 0 14 14"><path d="M0 0L14 14M14 0L0 14" stroke="#7a1218" stroke-width="1.500"/></svg></button></div>
  <button class="palmenu" aria-label="パレットメニュー"><svg class="lt"><use href="#down"/></svg></button>
</div>
<div class="hscroll palscroll"><button aria-label="左へ"><svg class="lt"><use href="#down"/></svg></button><div class="track"><div class="thumb"><i></i><i></i><i></i></div></div><button aria-label="右へ"><svg class="rt"><use href="#down"/></svg></button></div>

<footer class="status">
  <dl class="style"><dt>フィル:</dt><dd>該当なし</dd><dt>ストローク:</dt><dd>該当なし</dd></dl>
  <label class="olabel" for="op">O:</label>
  <span class="spin off small"><input id="op" value="0" disabled><span class="steps"><button disabled aria-label="増やす"><svg class="up"><use href="#down"/></svg></button><button disabled aria-label="減らす"><svg><use href="#down"/></svg></button></span></span>
  <div class="layerctl"><button aria-label="表示"><svg width="10" height="10"><use href="#eye"/></svg></button><button aria-label="ロック"><svg width="10" height="10"><use href="#unlock"/></svg></button></div>
  <span class="combo layer"><select aria-label="現在のレイヤー"><option>•レイヤー 2</option></select><span class="arrow"><svg><use href="#down"/></svg></span></span>
  <p class="msg">オブジェクトが選択されていません。オブジェクトをクリック、Shift+クリック、オブジェクト上で Alt+マウススクロール、または囲むようにドラッグして選択してください。</p>
  <dl class="coords"><dt>X:</dt><dd>269.94</dd><dt>Y:</dt><dd>199.92</dd></dl>
  <label class="zlabel" for="zoom">Z:</label>
  <span class="spin zoom"><input id="zoom" value="50%"><span class="steps"><button class="live" aria-label="増やす"><svg class="up"><use href="#down"/></svg></button><button class="live" aria-label="減らす"><svg><use href="#down"/></svg></button></span></span>
</footer>
</div>
<script src="script.js"></script>
</body>
</html>
```
FILE: styles.css
```css
* { box-sizing: border-box; }
body { margin: 0; font: 12px/16px "DejaVu Sans", "Noto Sans CJK JP", sans-serif; color: #000; background: #efefef; }
button, input, select { font: inherit; color: inherit; margin: 0; padding: 0; border: 0; background: none; border-radius: 0; min-width: 0; }
button { display: flex; align-items: center; justify-content: center; flex: none; }
svg { display: block; flex: none; }
h1, h2, p, dl, dd, ul { margin: 0; padding: 0; font-size: 12px; font-weight: normal; }
ul { list-style: none; }
.defs { position: absolute; }
.grow { flex: 1; }
.up { transform: rotate(180deg); }
.lt { transform: rotate(90deg); }
.rt { transform: rotate(-90deg); }
.app { display: flex; flex-direction: column; height: 100vh; overflow: hidden; }

.titlebar { display: flex; align-items: center; height: 22px; padding: 0 2px 2px 1px; border-top: 1px solid #333; background: linear-gradient(#98b4d2, #94b3d4 45%, #b7cee8); flex: none; }
.title { flex: 1; margin-left: 9px; white-space: nowrap; }
.winbtns { display: flex; gap: 2px; align-self: flex-start; padding-top: 1px; }
.winbtn { width: 31px; height: 17px; border: 1px solid #5a6f8c; border-radius: 2px; background: linear-gradient(#c4d6ea 45%, #96b3d2 50%, #b4cce6); box-shadow: inset 0 0 0 1px #d5e2f0; }
.winbtn.close { border-color: #5b1f22; background: linear-gradient(#e0a093 45%, #c04a36 50%, #d5735a); box-shadow: inset 0 0 0 1px #e9b5a8; }

.menubar { display: flex; height: 22px; padding-top: 1px; border-bottom: 1px solid #b3bacb; background: linear-gradient(#fff, #eef1fa 35%, #dae0f2 40%, #dfe5f6); flex: none; }
.menubar button { padding: 0 7px 0 8px; white-space: nowrap; }
u { text-underline-offset: 2px; }

.toolbar { display: flex; align-items: center; height: 40px; padding-left: 2px; border-bottom: 1px solid #b3bacb; background: linear-gradient(#fff, #e8ebf6 20%, #d3d9ed 24%, #d3d9ed 60%, #e0e5f7); flex: none; }
.tb { width: 26px; height: 26px; }
.vsep { width: 2px; height: 22px; margin: 0 5px; border-left: 1px solid #aaa; border-right: 1px solid #fff; flex: none; }
.fieldlabel { padding: 0 5px 0 9px; color: #888; white-space: nowrap; text-shadow: 1px 1px #fff; }
.spin { display: flex; width: 62px; height: 25px; flex: none; background: #fff; }
.spin input { flex: 1; width: 0; padding-left: 3px; border: 1px solid #aaa; border-right: 0; box-shadow: inset 0 0 0 1px #fff; background: #fff; }
.spin.off input { background: #efefef; color: #888; }
.steps { display: flex; flex-direction: column; gap: 1px; width: 10px; margin-left: 2px; flex: none; }
.steps button { flex: 1; border: 1px solid #bbb; background: #efefef; }
.steps svg { width: 8px; height: 8px; fill: #999; }
.steps .live svg { fill: #5670b8; }
.combo { display: grid; grid-template-columns: 1fr 19px; height: 24px; }
.combo select { grid-area: 1 / 1 / 2 / 3; appearance: none; padding-left: 3px; border: 1px solid #999; background: #fff; }
.arrow { grid-area: 1 / 2; display: flex; align-items: center; justify-content: center; border: 1px solid #666; background: linear-gradient(#f6f6f6, #ccc); pointer-events: none; }
.arrow svg { width: 10px; height: 10px; }
.unit { width: 49px; flex: none; }
.toggles { display: flex; }
.toggle { width: 26px; height: 34px; border: 1px solid #4c5060; border-radius: 4px; background: linear-gradient(#b9bfd2, #cdd4e8); }

.main { flex: 1; display: flex; min-height: 0; border-bottom: 1px solid #888; }
.toolbox { width: 33px; padding: 2px 1px; background: linear-gradient(#dde2f4, #d3d9ed 5%, #d3d9ed 95%, #dfe4f6); border-left: 1px solid #eee; flex: none; }
.tool { position: relative; width: 30px; height: 30px; }
.tool svg { width: 24px; height: 24px; }
.tool.on { border: 1px solid #4c5060; border-radius: 4px; background: linear-gradient(#b6bccf, #ccd3e6); }
.tool.text { padding-right: 5px; }
.glyph { font-size: 26px; line-height: 24px; font-weight: bold; }
.tool .caret { position: absolute; right: 1px; width: 7px; }

.editor { flex: 1; min-width: 0; display: grid; grid-template-columns: 17px 1fr 17px; grid-template-rows: 15px 1fr 17px; padding-right: 6px; background: #efefef; }
.hruler, .vruler, .canvas { width: 100%; height: 100%; overflow: hidden; }
.hruler, .vruler { font-size: 9px; }
.hruler { border-bottom: 1px solid #000; }
.vruler { border-right: 1px solid #000; }
.canvas { background: #fff; }
.corner { width: 17px; height: 15px; }
.vscroll, .hscroll { display: flex; background: #ececec; }
.vscroll { flex-direction: column; width: 16px; margin-left: 1px; }
.vscroll button, .hscroll button { width: 16px; height: 16px; }
.vscroll svg, .hscroll svg { width: 10px; height: 10px; fill: #444; }
.track { flex: 1; display: flex; }
.vscroll .track { flex-direction: column; padding-top: 202px; }
.thumb { display: flex; align-items: center; justify-content: center; gap: 1px; border: 1px solid #999; border-radius: 2px; background: linear-gradient(#f6f6f6, #e6e6e6 45%, #cfcfd2 50%, #c0c0c4); }
.thumb i { width: 2px; height: 8px; background: linear-gradient(90deg, #555 50%, #fff 50%); }
.vscroll .thumb { flex-direction: column; height: 54%; background: linear-gradient(90deg, #f6f6f6, #e6e6e6 45%, #cfcfd2 50%, #c0c0c4); }
.vscroll .thumb i { width: 8px; height: 2px; background: linear-gradient(#555 50%, #fff 50%); }
.hscroll { align-items: center; }
.hscroll .track { height: 15px; padding-left: 3px; }
.hscroll .thumb { width: 76%; }

.docks { position: relative; width: 406px; border: solid #000; border-width: 1px 0 0 1px; margin-top: 1px; background: #efefef; flex: none; }
.dialog { margin-right: 1px; border-right: 1px solid #fff; border-bottom: 1px solid #fff; }
.dialog + .dialog { padding-top: 6px; }
.dtitle { display: flex; align-items: center; height: 23px; margin-bottom: 4px; border-bottom: 1px solid #aaa; }
.dtitle h2 { flex: 1; margin-left: 1px; white-space: nowrap; }
.mini { width: 22px; height: 21px; }
.framed { border: 1px solid #bbb; border-radius: 3px; background: #f6f6f6; }
.dbody { padding: 0 5px 6px; }
.layerlist { height: 64px; border: 1px solid #aaa; padding: 1px; background: #fff; }
.layerlist li { display: flex; align-items: center; height: 26px; }
.layerlist .sel { background: #efefef; }
.layerlist button { width: 18px; }
.layerlist span { margin-left: 18px; }
.layerbtns { display: flex; }
.layerbtns button { width: 26px; height: 25px; }
.layerbtns .hover { border: 1px solid #bbb; border-radius: 3px; background: #f4f4f4; }
.blend { display: flex; align-items: center; margin: 3px 0 4px; }
.blend label { width: 101px; white-space: nowrap; }
.blend .combo { flex: 1; }
.slider { display: flex; height: 26px; background: #fff; }
.slider + .slider { margin-top: 5px; }
.bar { flex: 1; display: flex; align-items: center; margin: 1px 0; padding: 0 1px 0 5px; border: 1px solid #fff; outline: 1px solid #aaa; border-right: 2px solid #000; border-bottom: 2px solid #000; background: #b7c3cd; }
.bar input { flex: 1; width: 0; text-align: right; }
.off .bar { background: #efefef; color: #888; border-color: #fff; }

.tabs { display: flex; align-items: flex-end; }
.tab { height: 26px; padding: 0 5px 0 2px; gap: 4px; border: 1px solid #888a94; border-left: 0; border-bottom: 0; background: linear-gradient(#efefef 30%, #d8d8d8); white-space: nowrap; }
.tab.active { height: 29px; padding: 0 6px 0 4px; gap: 5px; border-left: 1px solid #888a94; margin-bottom: -1px; background: #fff; z-index: 1; }
.page { height: 257px; border: 1px solid #888a94; margin-bottom: 5px; padding: 8px 7px; background: #fff; }
.paints { display: flex; align-items: center; }
.paints button { width: 30px; height: 30px; }
.paints .rule { width: 19px; }
.q { font-size: 23px; font-weight: bold; color: #333; }
.none { margin-top: 9px; font-weight: bold; }
.mark { position: absolute; left: -6px; top: 6px; pointer-events: none; }
.pointer { position: absolute; left: 350px; top: 104px; pointer-events: none; }

.side { display: flex; flex-direction: column; align-items: center; width: 30px; padding-top: 2px; background: linear-gradient(#e8ecf8, #d3d9ed 3%, #d3d9ed 96%, #e0e5f7); flex: none; }
.commands { width: 31px; border-left: 1px solid #fff; border-right: 1px solid #f0f2fa; }
.side button { width: 26px; height: 26px; }
.side svg { width: 18px; height: 18px; }
.side hr { width: 16px; height: 2px; margin: 5px 0; border: 0; border-top: 1px solid #aaa; border-bottom: 1px solid #fff; flex: none; }
.side .on { border: 1px solid #4c5060; border-radius: 4px; background: linear-gradient(#b6bccf, #ccd3e6); }
.serifT { font: bold 24px/24px "Liberation Serif", serif; }
.more { font-size: 16px; color: #6d79b0; }
.snapA { display: grid; place-items: center; }
.snapA span, .snapA svg { grid-area: 1 / 1; }
.snapA span { font-size: 18px; font-weight: bold; font-style: italic; }

.palette { display: flex; height: 19px; padding-left: 2px; border-top: 2px solid #000; border-bottom: 3px solid #fff; background: #efefef; flex: none; }
.swatches { flex: 1; display: flex; overflow: hidden; }
.swatches button { width: 14px; height: 14px; }
.swatches .nofill { background: #fff; }
.palmenu { width: 11px; height: 14px; background: #fff; }
.palmenu svg { width: 10px; height: 10px; }
.palscroll { height: 15px; flex: none; padding-right: 9px; }
.palscroll .track { padding-left: 2px; }
.palscroll .thumb { width: 26%; }

.status { display: flex; align-items: center; height: 35px; flex: none; }
.status dl { display: grid; line-height: 17px; white-space: nowrap; }
.style { grid-template-columns: 68px 51px; padding-left: 2px; }
.olabel { width: 19px; padding-left: 3px; }
.small { width: 47px; }
.layerctl { display: flex; height: 34px; margin-left: 3px; padding: 0 1px; border-left: 1px solid #aaa; }
.layerctl button { width: 19px; }
.layer { width: 88px; height: 34px; font-weight: bold; font-size: 10px; flex: none; }
.layer select { padding-left: 2px; }
.msg { flex: 1; margin-left: 2px; white-space: nowrap; overflow: hidden; min-width: 0; }
.coords { grid-template-columns: 20px 52px; padding-left: 4px; border-left: 1px solid #aaa; }
.coords dd { font-family: "DejaVu Sans Mono", monospace; font-size: 12px; }
.zlabel { width: 14px; }
.zoom { width: 56px; margin-right: 1px; }
.zoom input { text-align: center; padding: 0; }
```
FILE: script.js
```js
const NS = "http://www.w3.org/2000/svg";
const PX_PER_MM = 1.872;

function add(svg, name, attrs, text) {
  const el = document.createElementNS(NS, name);
  for (const key in attrs) el.setAttribute(key, attrs[key]);
  if (text !== undefined) el.textContent = text;
  svg.appendChild(el);
}

// Horizontal ruler: a tick every 5 mm, a label every 50 mm.
const h = document.getElementById("hruler");
for (let mm = -285; mm <= 280; mm += 5) {
  const x = Math.round(536 + mm * PX_PER_MM);
  if (x < 2) continue;
  const len = mm % 50 === 0 ? 11 : mm % 10 === 0 ? 5 : 3;
  add(h, "rect", { x, y: 14 - len, width: 1, height: len });
  if (mm % 50 === 0) add(h, "text", { x: x + 1, y: 10 }, mm);
}
add(h, "path", { d: "M1037 10H1046L1041.500 14Z" });

const v = document.getElementById("vruler");
for (let mm = -30; mm <= 325; mm += 5) {
  const y = Math.round(615 - mm * PX_PER_MM);
  const len = mm % 50 === 0 ? 11 : mm % 10 === 0 ? 5 : 3;
  add(v, "rect", { x: 16 - len, y, width: len, height: 1 });
  if (mm % 50 === 0) {
    [...String(mm)].forEach((digit, i) => add(v, "text", { x: 4, y: y + 8 + i * 8 }, digit));
  }
}
add(v, "path", { d: "M12 237V246L17 241.500Z" });

const colors = `000000 1a1a1a 333333 4d4d4d 666666 808080 999999 b3b3b3 cccccc e6e6e6 ececec f2f2f2 f9f9f9 ffffff
800000 ff0000 808000 ffff00 008000 00ff00 008080 00ffff 000080 0000ff 800080 ff00ff
2b0000 550000 800000 aa0000 d40000 ff0000 ff2a2a ff5555 ff8080 ffaaaa ffd5d5
280b0b 501616 782121 a02c2c c83737 d35f5f de8787 e9afaf f4d7d7
241c1c 483737 6c5353 916f6f ac9393 c8b7b7 e3dbdb
2b1100 552200 803300 aa4400 d45500 ff6600 ff7f2a ff9955 ffb380 ffccaa ffe6d5
28170b 502d16 784421 a05a2c c87137 d38d5f deaa87 e9c6af f4e3d7
241f1c 483e37 6c5d53 917c6f ac9d93 c8beb7 e3dedb
2b2200 554400 806600 aa8800 d4aa00 ffcc00 ffd42a ffdd55 ffe680 ffeeaa fff6d5
28220b 504416 786721 a0892c c8ab37 d3bc5f decd87 e9ddaf f4eed7
24221c 484537 6c6753 918a6f aca793 c8c4b7 e3e2db
222b00 445500 668000 88aa00 aad400 ccff00`.split(/\s+/);
const swatches = document.getElementById("swatches");
for (const color of colors) {
  const b = document.createElement("button");
  b.style.backgroundColor = "#" + color;
  b.setAttribute("aria-label", "#" + color);
  swatches.appendChild(b);
}
```
